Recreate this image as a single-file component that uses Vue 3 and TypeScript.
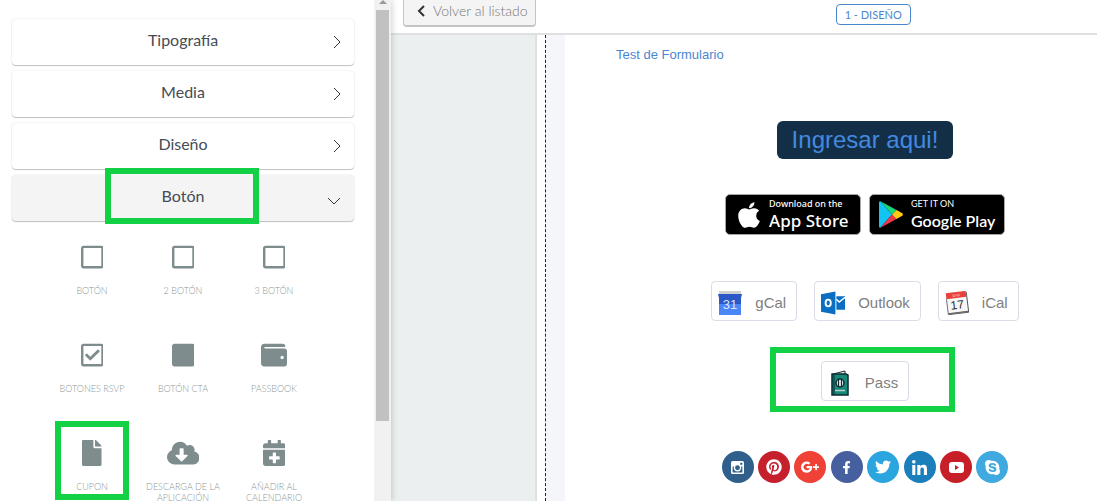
<script setup lang="ts">
interface Tile { label: string; icon: string; box: string; marked?: boolean }
interface Social { name: string; color: string; box: string; path: string; size: string }

const sections: { name: string; open: boolean }[] = [
  { name: 'Tipografía', open: false },
  { name: 'Media', open: false },
  { name: 'Diseño', open: false },
  { name: 'Botón', open: true },
]

const square = 'M400 32H48C21.5 32 0 53.5 0 80v352c0 26.500 21.500 48 48 48h352c26.500 0 48-21.500 48-48V80c0-26.500-21.500-48-48-48zm-6 400H54c-3.300 0-6-2.700-6-6V86c0-3.300 2.700-6 6-6h340c3.300 0 6 2.700 6 6v340c0 3.300-2.700 6-6 6z'

const tiles: Tile[] = [
  { label: 'Botón', box: '0 0 448 512', icon: square },
  { label: '2 Botón', box: '0 0 448 512', icon: square },
  { label: '3 Botón', box: '0 0 448 512', icon: square },
  { label: 'Botones RSVP', box: '0 0 448 512', icon: 'M400 32H48C21.49 32 0 53.49 0 80v352c0 26.51 21.49 48 48 48h352c26.51 0 48-21.49 48-48V80c0-26.51-21.49-48-48-48zm0 400H48V80h352v352zm-35.864-241.724L191.547 361.48c-4.705 4.667-12.303 4.637-16.97-.068l-90.781-91.516c-4.667-4.705-4.637-12.303.069-16.971l22.719-22.536c4.705-4.667 12.303-4.637 16.97.069l59.792 60.277 141.352-140.216c4.705-4.667 12.303-4.637 16.97.068l22.536 22.718c4.667 4.706 4.637 12.304-.068 16.971z' },
  { label: 'Botón CTA', box: '0 0 448 512', icon: 'M400 32H48C21.5 32 0 53.5 0 80v352c0 26.5 21.5 48 48 48h352c26.5 0 48-21.5 48-48V80c0-26.500-21.500-48-48-48z' },
  { label: 'Passbook', box: '0 0 512 512', icon: 'M461.2 128H80c-8.840 0-16-7.160-16-16s7.160-16 16-16h384c8.840 0 16-7.160 16-16 0-26.510-21.490-48-48-48H64C28.650 32 0 60.650 0 96v320c0 35.350 28.650 64 64 64h397.200c28.020 0 50.800-21.530 50.800-48V176c0-26.470-22.780-48-50.800-48zM416 336c-17.670 0-32-14.330-32-32s14.330-32 32-32 32 14.330 32 32-14.330 32-32 32z' },
  { label: 'Cupon', marked: true, box: '0 0 384 512', icon: 'M224 136V0H24C10.7 0 0 10.7 0 24v464c0 13.300 10.700 24 24 24h336c13.300 0 24-10.700 24-24V160H248c-13.200 0-24-10.800-24-24zm160-14.100v6.100H256V0h6.100c6.400 0 12.500 2.500 17 7l97.900 98c4.500 4.500 7 10.600 7 16.900z' },
  { label: 'Descarga de la aplicación', box: '0 0 640 512', icon: 'M537.6 226.6c4.100-10.700 6.400-22.400 6.400-34.600 0-53-43-96-96-96-19.700 0-38.100 6-53.300 16.200C367 64.200 315.300 32 256 32c-88.400 0-160 71.600-160 160 0 2.700.1 5.400.2 8.100C40.200 219.800 0 273.200 0 336c0 79.500 64.500 144 144 144h368c70.700 0 128-57.300 128-128 0-61.900-44-113.600-102.400-125.400zm-132.900 88.700L299.300 420.700c-6.200 6.200-16.400 6.200-22.600 0L171.300 315.300c-10.100-10.100-2.900-27.300 11.300-27.300H248V176c0-8.800 7.200-16 16-16h48c8.800 0 16 7.200 16 16v112h65.400c14.200 0 21.400 17.200 11.300 27.300z' },
  { label: 'Añadir al calendario', box: '0 0 448 512', icon: 'M436 160H12c-6.600 0-12-5.400-12-12v-36c0-26.500 21.500-48 48-48h48V12c0-6.600 5.400-12 12-12h40c6.600 0 12 5.400 12 12v52h128V12c0-6.600 5.400-12 12-12h40c6.600 0 12 5.400 12 12v52h48c26.500 0 48 21.500 48 48v36c0 6.600-5.400 12-12 12zM12 192h424c6.600 0 12 5.400 12 12v260c0 26.500-21.500 48-48 48H48c-26.500 0-48-21.500-48-48V204c0-6.600 5.400-12 12-12zm316 140c0-6.600-5.400-12-12-12h-60v-60c0-6.600-5.400-12-12-12h-40c-6.600 0-12 5.400-12 12v60h-60c-6.600 0-12 5.400-12 12v40c0 6.600 5.400 12 12 12h60v60c0 6.600 5.400 12 12 12h40c6.600 0 12-5.400 12-12v-60h60c6.600 0 12-5.400 12-12v-40z' },
]

const socials: Social[] = [
  { name: 'Instagram', color: '#2f5f8a', size: 'small', box: '0 0 24 24', path: 'M3 0h18a3 3 0 0 1 3 3v18a3 3 0 0 1-3 3H3a3 3 0 0 1-3-3V3a3 3 0 0 1 3-3zM17 3v4h4V3zM3 10v11h18V10h-2.500a7 7 0 1 1-13 0zM12 8a4.500 4.500 0 1 0 0 9 4.500 4.500 0 0 0 0-9z' },
  { name: 'Pinterest', color: '#c5202c', size: 'large', box: '0 0 496 512', path: 'M496 256c0 137-111 248-248 248-25.600 0-50.200-3.900-73.400-11.100 10.100-16.500 25.200-43.500 30.800-65 3-11.600 15.400-59 15.400-59 8.100 15.400 31.700 28.500 56.800 28.500 74.800 0 128.700-68.800 128.700-154.300 0-81.900-66.900-143.200-152.900-143.200-107 0-163.900 71.800-163.900 150.100 0 36.400 19.400 81.700 50.300 96.100 4.700 2.200 7.200 1.200 8.300-3.300.8-3.400 5-20.300 6.900-28.100.6-2.500.3-4.700-1.700-7.100-10.100-12.500-18.300-35.300-18.300-56.600 0-54.700 41.400-107.600 112-107.600 60.900 0 103.600 41.500 103.600 100.900 0 67.100-33.900 113.600-78 113.600-24.300 0-42.600-20.100-36.700-44.800 7-29.500 20.500-61.300 20.500-82.600 0-19-10.200-34.900-31.400-34.900-24.900 0-44.900 25.700-44.900 60.200 0 22 7.400 36.800 7.400 36.800s-24.500 103.800-29 123.200c-5 21.400-3 51.600-.9 71.200C65.400 450.900 0 361.100 0 256 0 119 111 8 248 8s248 111 248 248z' },
  { name: 'Google Plus', color: '#ef4136', size: 'wide', box: '0 4 24 16', path: 'M7.500 10.500v3h4.300c-.5 1.700-2 2.700-4.300 2.700a4.200 4.200 0 1 1 2.800-7.400L12.500 6.600A7.500 7.500 0 1 0 15 12.200l-.1-1.700zM19 8v3h-3v2.200h3v3h2.200v-3h3V11h-3V8z' },
  { name: 'Facebook', color: '#465f9e', size: 'small', box: '0 0 320 512', path: 'M279.14 288l14.220-92.660h-88.910v-60.130c0-25.350 12.420-50.060 52.240-50.060h40.420V6.260S260.430 0 225.360 0c-73.220 0-121.080 44.380-121.080 124.720v70.620H22.890V288h81.390v224h100.170V288z' },
  { name: 'Twitter', color: '#2ba5de', size: 'large', box: '0 0 512 512', path: 'M459.37 151.716c.325 4.548.325 9.097.325 13.645 0 138.720-105.583 298.558-298.558 298.558-59.452 0-114.680-17.219-161.137-47.106 8.447.974 16.568 1.299 25.340 1.299 49.055 0 94.213-16.568 130.274-44.832-46.132-.975-84.792-31.188-98.112-72.772 6.498.974 12.995 1.624 19.818 1.624 9.421 0 18.843-1.300 27.614-3.573-48.081-9.747-84.143-51.980-84.143-102.985v-1.299c13.969 7.797 30.214 12.670 47.431 13.319-28.264-18.843-46.781-51.005-46.781-87.391 0-19.492 5.197-37.360 14.294-52.954 51.655 63.675 129.300 105.258 216.365 109.807-1.624-7.797-2.599-15.918-2.599-24.040 0-57.828 46.782-104.934 104.934-104.934 30.213 0 57.502 12.670 76.670 33.137 23.715-4.548 46.456-13.320 66.599-25.340-7.798 24.366-24.366 44.833-46.132 57.827 21.117-2.273 41.584-8.122 60.426-16.243-14.292 20.791-32.161 39.308-52.628 54.253z' },
  { name: 'LinkedIn', color: '#1b7fbb', size: 'medium', box: '0 0 448 448', path: 'M100.28 448H7.400V148.900h92.880zM53.790 108.100C24.090 108.100 0 83.500 0 53.800a53.790 53.790 0 0 1 107.580 0c0 29.700-24.100 54.300-53.790 54.300zM447.900 448h-92.680V302.400c0-34.700-.7-79.200-48.290-79.200-48.290 0-55.690 37.700-55.690 76.700V448h-92.780V148.900h89.080v40.800h1.300c12.400-23.500 42.690-48.300 87.880-48.300 94 0 111.280 61.900 111.280 142.300V448z' },
  { name: 'YouTube', color: '#c71f27', size: 'medium', box: '0 0 30 30', path: 'M6 4h18q6 0 6 6v10q0 6-6 6H6q-6 0-6-6V10q0-6 6-6zM12 10v10l8-5z' },
  { name: 'Skype', color: '#3fa9e0', size: 'medium', box: '0 32 448 448', path: 'M424.7 299.8c2.900-14 4.700-28.900 4.700-43.800 0-113.500-91.900-205.300-205.300-205.300-14.900 0-29.700 1.700-43.800 4.700C161.300 40.700 137.700 32 112 32 50.200 32 0 82.200 0 144c0 25.700 8.700 49.300 23.300 68.200-2.900 14-4.700 28.900-4.700 43.800 0 113.500 91.900 205.300 205.300 205.300 14.900 0 29.700-1.700 43.800-4.700 19 14.600 42.600 23.300 68.200 23.300 61.800 0 112-50.200 112-112 .1-25.600-8.600-49.200-23.200-68.100zm-194.600 91.500c-65.600 0-120.500-29.200-120.500-65 0-16 9-30.600 29.500-30.600 31.200 0 34.100 44.900 88.100 44.900 25.700 0 42.300-11.400 42.300-26.300 0-18.700-16-21.600-42-28-62.500-15.400-117.800-22-117.800-87.200 0-59.200 58.600-81.100 109.100-81.100 55.100 0 110.800 21.900 110.800 55.400 0 16.900-11.400 31.800-30.300 31.800-28.300 0-29.200-33.500-75-33.500-25.700 0-42 7-42 22.500 0 19.800 20.800 21.800 69.100 33 41.400 9.300 90.700 26.800 90.700 77.600 0 59.100-57.100 86.500-112 86.500z' },
]
</script>

<template>
  <div class="editor">
    <aside class="sidebar">
      <div class="panel">
        <nav class="sections">
          <button v-for="s in sections" :key="s.name" type="button" class="section" :class="{ open: s.open }" :aria-expanded="s.open">
            <span>{{ s.name }}</span>
            <svg class="chevron" viewBox="0 0 14 14" aria-hidden="true">
              <path :d="s.open ? 'M1 4l6 6 6-6' : 'M4 1l6 6-6 6'" />
            </svg>
            <i v-if="s.open" class="mark"></i>
          </button>
        </nav>
        <div class="tiles">
          <button v-for="t in tiles" :key="t.label" type="button" class="tile">
            <svg class="tile-icon" :viewBox="t.box" aria-hidden="true"><path :d="t.icon" /></svg>
            <span>{{ t.label }}</span>
            <i v-if="t.marked" class="mark"></i>
          </button>
        </div>
      </div>
      <div class="scrollbar">
        <svg class="scroll-arrow" viewBox="0 0 8 4" aria-hidden="true"><path d="M0 4l4-4 4 4z" /></svg>
        <div class="thumb"></div>
      </div>
    </aside>

    <main class="main">
      <header class="topbar">
        <button type="button" class="back">
          <svg viewBox="0 0 8 12" aria-hidden="true"><path d="M7 1L2 6l5 5" /></svg>
          <span>Volver al listado</span>
        </button>
        <button type="button" class="step">1 - DISEÑO</button>
      </header>
      <div class="workspace">
        <div class="gutter"></div>
        <div class="canvas">
          <article class="mail">
            <a href="#" class="form-link">Test de Formulario</a>
            <a href="#" class="cta">Ingresar aqui!</a>
            <div class="stores">
              <a href="#" class="store apple">
                <svg viewBox="0 30 384 452" aria-hidden="true"><path fill="#fff" d="M318.7 268.7c-.2-36.700 16.400-64.400 50-84.800-18.800-26.900-47.200-41.700-84.700-44.600-35.500-2.800-74.300 20.700-88.500 20.700-15 0-49.400-19.700-76.400-19.700C63.300 141.200 4 184.800 4 273.500q0 39.300 14.400 81.200c12.800 36.700 59 126.700 107.200 125.200 25.200-.6 43-17.900 75.800-17.900 31.800 0 48.300 17.900 76.400 17.900 48.600-.7 90.400-82.500 102.600-119.300-65.200-30.700-61.700-90-61.700-91.900zm-56.600-164.200c27.300-32.400 24.800-61.900 24-72.500-24.100 1.400-52 16.400-67.900 34.900-17.500 19.800-27.800 44.300-25.600 71.900 26.100 2 49.900-11.400 69.500-34.300z" /></svg>
                <span class="store-text"><small>Download on the</small><b>App Store</b></span>
              </a>
              <a href="#" class="store google">
                <svg viewBox="0 0 24 27" aria-hidden="true">
                  <path fill="#12c4f4" d="M1 0L13 13.500 1 27Q0 26.500 0 25V2Q0 .5 1 0z" />
                  <path fill="#19d77b" d="M1 0l16.500 9L13 13.500z" />
                  <path fill="#f0364a" d="M1 27l16.500-9-4.500-4.500z" />
                  <path fill="#ffc914" d="M17.500 9l5.800 3.300q1.200 1.200 0 2.400L17.500 18 13 13.500z" />
                </svg>
                <span class="store-text"><small>GET IT ON</small><b>Google Play</b></span>
              </a>
            </div>
            <div class="calendars">
              <a href="#" class="service">
                <svg viewBox="0 0 24 24" aria-hidden="true">
                  <path fill="#cfcfcf" d="M1 0h22v4H1z" />
                  <path fill="#2b57c7" d="M0 3h24l-1 4v6H1V7z" /><path fill="#4a86f5" d="M1 13h22v11H1z" />
                  <text x="12" y="18" text-anchor="middle" font-size="13" fill="#dce7ff">31</text>
                </svg>
                <span>gCal</span>
              </a>
              <a href="#" class="service">
                <svg viewBox="0 0 25 24" aria-hidden="true">
                  <path fill="#0a6fc2" d="M0 3l15-3v24L0 21zM16 5h9v14h-9z" />
                  <path fill="none" stroke="#fff" stroke-width="1.500" d="M16 8l3 3 6-5" />
                  <ellipse cx="7.500" cy="12" rx="2.700" ry="3.500" fill="none" stroke="#fff" stroke-width="2" />
                </svg>
                <span>Outlook</span>
              </a>
              <a href="#" class="service">
                <svg viewBox="0 0 24 24" aria-hidden="true">
                  <g transform="rotate(-7 12 12)">
                    <rect x="2" y="2" width="21" height="21" rx="1" fill="#555" />
                    <path fill="#f7f7f7" d="M2 2h20v19H2z" /><path fill="#e8413c" d="M2 1h20v6H2z" />
                    <path fill="none" stroke="#f7a19e" d="M9 3v2h2V3m2 0v2h2V3" />
                    <path stroke="#777" d="M2 7v15h20" fill="none" />
                    <text x="12" y="18" text-anchor="middle" font-size="12" fill="#333">17</text>
                  </g>
                </svg>
                <span>iCal</span>
              </a>
            </div>
            <div class="pass-row">
              <a href="#" class="service pass">
                <svg viewBox="0 0 18 26" aria-hidden="true">
                  <path fill="#eee" stroke="#102f35" d="M2 4l12-3v3" />
                  <path fill="#168a78" stroke="#0c2930" stroke-width="1.500" d="M1 4h14l2 1v20H1z" />
                  <path stroke="#0c2930" d="M3 5v20" />
                  <circle cx="9" cy="13" r="4" fill="#eee" stroke="#0c2930" stroke-width="1.500" />
                  <path stroke="#0c2930" stroke-width="1.200" d="M7.500 10v6M10.500 10v6" />
                  <path stroke="#b5ccc8" stroke-width="1.500" d="M4 20.500h10" />
                </svg>
                <span>Pass</span>
              </a>
              <i class="mark"></i>
            </div>
            <div class="socials">
              <a v-for="s in socials" :key="s.name" href="#" class="social" :aria-label="s.name" :style="{ background: s.color }">
                <svg :class="s.size" :viewBox="s.box" aria-hidden="true"><path fill-rule="evenodd" :d="s.path" /></svg>
              </a>
            </div>
          </article>
        </div>
      </div>
    </main>
  </div>
</template>

<style>
body { margin: 0; }
</style>

<style scoped>
* { box-sizing: border-box; }
button { border: 0; padding: 0; background: none; font: inherit; color: inherit; cursor: pointer; }
a { text-decoration: none; }
svg { display: block; flex: none; }

.editor { display: flex; height: 100vh; overflow: hidden; background: #fff; font-family: Lato, "Liberation Sans", sans-serif; }

.mark { position: absolute; border: 6px solid #12d145; pointer-events: none; }

.sidebar { position: relative; z-index: 1; display: flex; flex: 0 0 391px; box-shadow: 1px 0 6px rgba(0, 0, 0, 0.18); background: #fff; }
.panel { flex: 1; padding: 19px 20px 0 12px; }
.sections { display: grid; gap: 6px; }
.section { position: relative; height: 46px; border-radius: 4px; box-shadow: 0 1px 1px rgba(0, 0, 0, 0.22), 0 0 2px rgba(0, 0, 0, 0.12); background: #fff; padding-bottom: 4px; color: #444c55; font-size: 16px; line-height: 20px; text-align: center; }
.section.open { background: #f4f4f4; }
.chevron { position: absolute; right: 10px; top: 16px; width: 14px; height: 14px; fill: none; stroke: #333; stroke-width: 1; }
.open .chevron { right: 13px; top: 19px; }
.section .mark { left: 93px; top: -7px; width: 154px; height: 56px; }

.tiles { display: grid; grid-template-columns: repeat(3, 91px); grid-auto-rows: 98px; justify-content: center; padding-top: 23px; }
.tile { position: relative; display: flex; flex-direction: column; align-items: center; gap: 15px; color: #8d9898; font-size: 9px; font-weight: 300; line-height: 11px; text-transform: uppercase; }
.tile-icon { height: 26px; fill: #7f8c8d; }
.tile .mark { left: 8px; top: -19px; width: 74px; height: 79px; }

.scrollbar { flex: 0 0 17px; background: #f1f1f1; padding: 0 2px; }
.scroll-arrow { width: 8px; height: 4px; margin: 0 auto 6px; fill: #999; }
.thumb { height: 82%; background: #c1c1c1; }

.main { flex: 1; min-width: 0; display: flex; flex-direction: column; }
.topbar { display: flex; align-items: flex-start; gap: 300px; height: 35px; flex: none; border-bottom: 2px solid #e0e0e0; padding-left: 12px; background: #fff; }
.back { display: flex; align-items: center; gap: 8px; height: 31px; margin-top: -4px; padding: 0 7px 0 13px; border: 1px solid #c4c4c4; border-bottom-width: 2px; border-radius: 4px; background: #f4f4f4; color: #777; font-size: 14px; font-weight: 300; line-height: 20px; white-space: nowrap; }
.back svg { width: 8px; height: 12px; fill: none; stroke: #333; stroke-width: 2; }
.step { margin-top: 4px; height: 21px; padding: 0 8px; border: 1px solid #4a86cf; border-radius: 4px; color: #4a86cf; font-size: 11px; line-height: 18px; white-space: nowrap; }

.workspace { flex: 1; min-height: 0; display: flex; overflow: hidden; }
.gutter { flex: 0 0 146px; background: #ebefef; border-right: 2px solid #dfdfdf; }
.canvas { flex: 1; display: flex; margin-left: 8px; border-left: 1px dashed #1c2233; background: #f4f6fb; padding-left: 19px; }
.mail { flex: 1 0 600px; display: flex; flex-direction: column; align-items: center; background: #fff; padding: 11px 0 0; font-family: "Liberation Sans", Arial, sans-serif; }
.form-link { align-self: flex-start; margin-left: 51px; color: #4a86cf; font-size: 13px; line-height: 18px; }
.cta { margin-top: 57px; padding: 0 15px; border-radius: 6px; background: #132f47; color: #4489e0; font-size: 24px; line-height: 38px; }

.stores { display: flex; gap: 8px; margin-top: 35px; }
.store { display: flex; align-items: center; width: 136px; height: 41px; border: 1px solid #a6a6a6; border-radius: 5px; background: #000; color: #fff; white-space: nowrap; }
.store-text { display: flex; flex-direction: column; gap: 2px; }
.store small { font-size: 9px; line-height: 11px; }
.store b { font-weight: 600; line-height: 20px; }
.apple { padding-left: 12px; gap: 9px; font-family: "Noto Sans", sans-serif; }
.apple svg { width: 22px; height: 26px; }
.apple small { font-weight: 500; }
.apple b { font-size: 17px; font-weight: 500; }
.google { padding-left: 9px; gap: 8px; font-family: Lato, sans-serif; }
.google svg { width: 24px; height: 27px; }
.google b { font-size: 16px; }

.calendars { display: flex; gap: 17px; margin-top: 46px; }
.service { display: flex; align-items: center; gap: 13px; height: 40px; border: 1px solid #dadce6; border-radius: 4px; padding: 3px 10px 0 6px; background: #fff; color: #808080; font-size: 15px; line-height: 18px; }
.service svg { width: 24px; height: 24px; }
.pass-row { position: relative; margin-top: 40px; }
.pass-row .mark { left: 50%; top: -14px; width: 185px; height: 65px; margin-left: -95px; }
.pass { gap: 16px; padding-left: 9px; }
.pass svg { width: 18px; height: 26px; }

.socials { display: flex; justify-content: space-between; width: 287px; margin-top: 50px; }
.social { display: flex; align-items: center; justify-content: center; width: 32px; height: 32px; border-radius: 50%; }
.social svg { fill: #fff; }
.small { width: 13px; height: 13px; }
.medium { width: 15px; height: 15px; }
.large { width: 16px; height: 16px; }
.wide { width: 18px; height: 12px; }
</style>
